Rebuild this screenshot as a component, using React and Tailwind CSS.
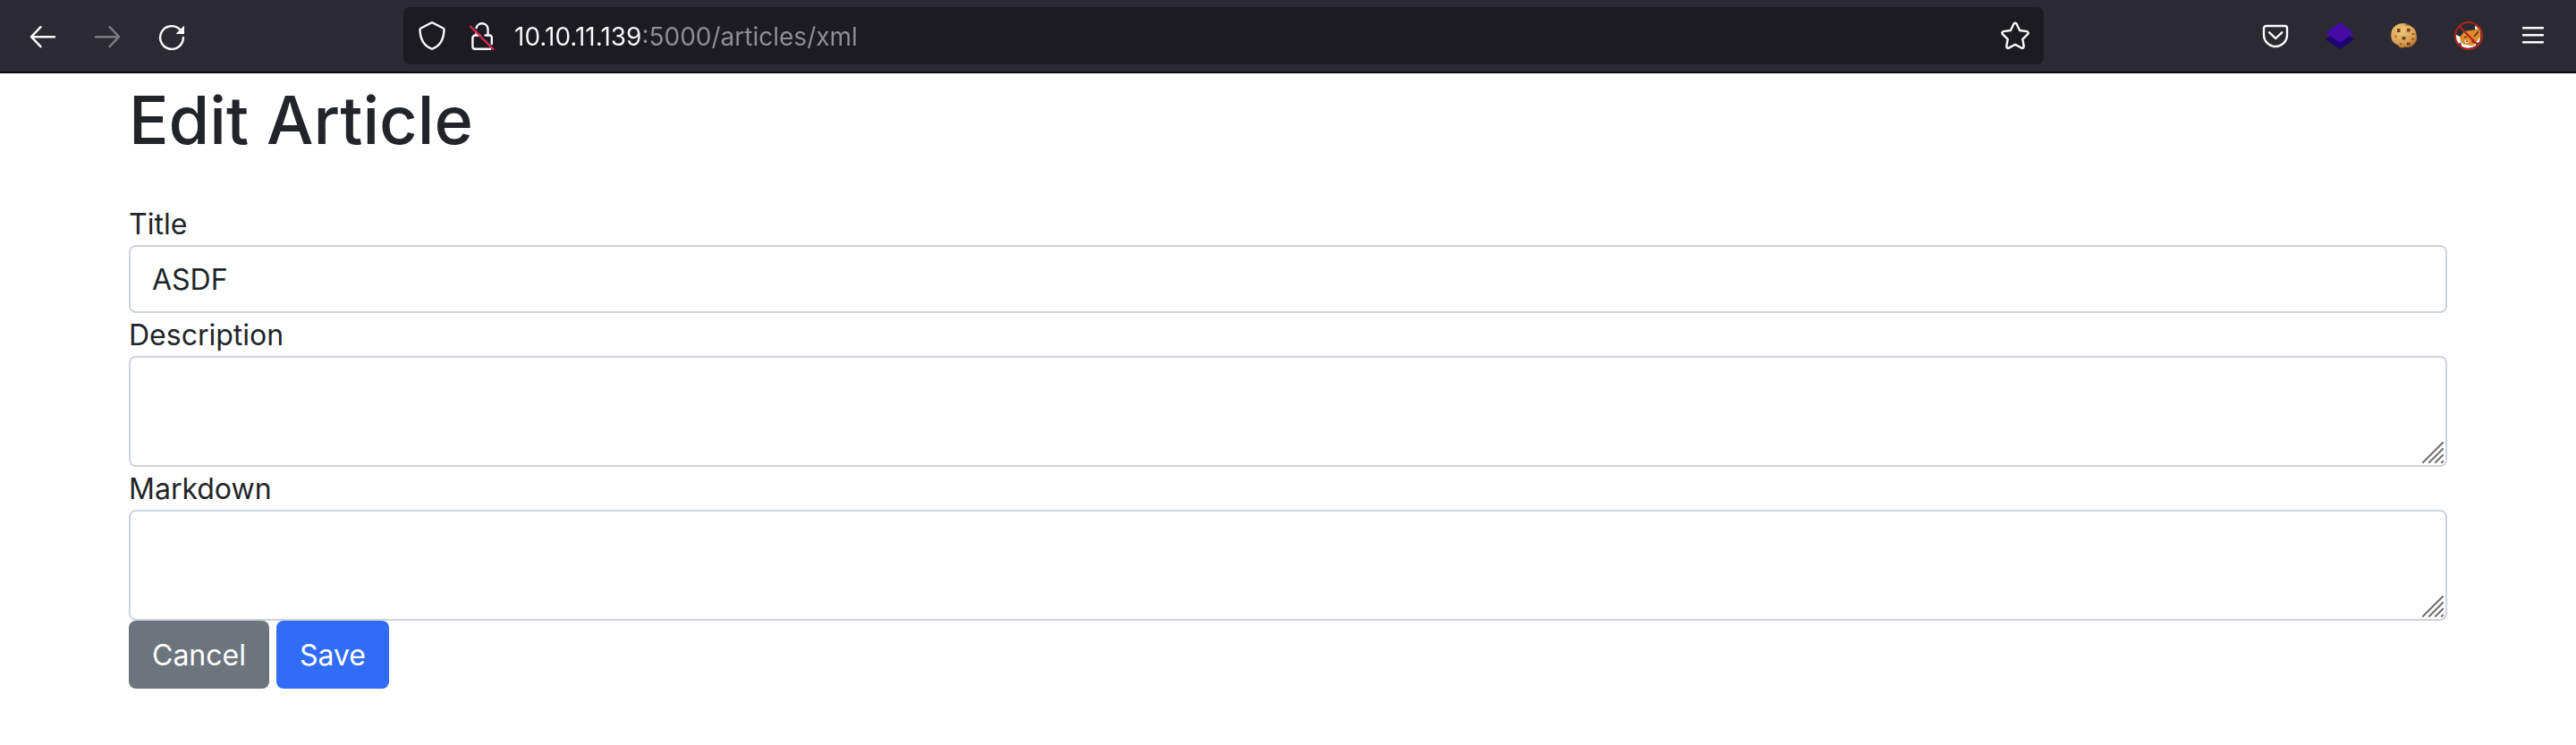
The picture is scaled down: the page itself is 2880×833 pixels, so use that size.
import React from "react";

function ToolbarButton({ label, children, disabled }) {
  return (
    <button
      type="button"
      aria-label={label}
      disabled={disabled}
      className="flex size-16 items-center justify-center rounded-lg text-[#fbfbfe] disabled:text-[#7d7c81]"
    >
      {children}
    </button>
  );
}

function Icon({ children }) {
  return (
    <svg
      className="size-8"
      viewBox="0 0 32 32"
      fill="none"
      stroke="currentColor"
      strokeWidth="2.4"
      strokeLinecap="round"
      strokeLinejoin="round"
      aria-hidden="true"
    >
      {children}
    </svg>
  );
}

function Toolbar() {
  return (
    <header className="flex h-[82px] items-center justify-between border-b-2 border-[#0c0c0d] bg-[#2b2a33] px-4">
      <nav aria-label="Browser" className="flex gap-2">
        <ToolbarButton label="Back">
          <Icon>
            <path d="M29 17.200H3.500M13.500 6.200 3 17.200l10.500 11" />
          </Icon>
        </ToolbarButton>
        <ToolbarButton label="Forward" disabled>
          <Icon>
            <path d="M3 17.200h25.500M18.500 6.200l10.500 11-10.500 11" />
          </Icon>
        </ToolbarButton>
        <ToolbarButton label="Reload">
          <Icon>
            <path d="M28.900 18A12.900 12.900 0 1 1 25 8.800" />
            <path d="M30 4.500V14h-9.500z" fill="currentColor" stroke="none" />
          </Icon>
        </ToolbarButton>
      </nav>

      <div className="flex h-16 w-[1834px] shrink items-center rounded-lg bg-[#1c1b22] px-4 text-[#fbfbfe]">
        <Icon>
          <path d="M15.200 1.500a2 2 0 0 1 1.600 0L28.400 7.500c.7.300 1.100 1 1.100 1.700C29.200 19 25.500 27 16.800 30.400a2 2 0 0 1-1.600 0C6.500 27 2.800 19 2.500 9.200c0-.7.4-1.400 1.100-1.700z" />
        </Icon>
        <span className="ml-6">
          <Icon>
            <path d="M9.500 7.200A6.600 6.600 0 0 1 22.500 8.600V15.500" />
            <path d="M13.500 15.500H8.300A2.900 2.900 0 0 0 5.400 18.400V28a2.800 2.800 0 0 0 2.800 2.800H25" />
            <path d="M9.500 15v-3M19.500 15.500H24.400A2.300 2.300 0 0 1 26.800 17.800V25" />
            <path d="m3 5.500 25.500 25.500" stroke="#e22850" />
          </Icon>
        </span>
        <input
          type="text"
          aria-label="Address"
          defaultValue="10.10.11.139:5000/articles/xml"
          spellCheck={false}
          className="ml-5 min-w-0 flex-1 bg-[linear-gradient(to_right,#fbfbfe_143px,#8f8f94_143px)] bg-clip-text pt-0.5 text-[28px] leading-10 text-transparent caret-white outline-none"
        />
        <button type="button" aria-label="Bookmark this page">
          <Icon>
            <path d="M14.400 2.700a1.800 1.800 0 0 1 3.200 0l3.500 7.300 8 1.100a1.800 1.800 0 0 1 1 3.100l-5.800 5.600 1.400 7.900a1.800 1.800 0 0 1-2.600 1.900L16 25.800l-7.100 3.800a1.800 1.800 0 0 1-2.600-1.900l1.400-7.900-5.800-5.600a1.800 1.800 0 0 1 1-3.100l8-1.100z" />
          </Icon>
        </button>
      </div>

      <div className="flex gap-2">
        <ToolbarButton label="Save to Pocket">
          <Icon>
            <path d="M5.500 5h21A2.500 2.500 0 0 1 29 7.500V15a13 13 0 0 1-26 0V7.500A2.500 2.500 0 0 1 5.500 5zM9.200 12.300l7 6.700 7-6.700" />
          </Icon>
        </ToolbarButton>
        <ToolbarButton label="Layers extension">
          <svg className="size-8" viewBox="0 0 32 32" aria-hidden="true">
            <path d="M16 9 32 20 16 31 0 20z" fill="#1b0370" />
            <path d="M16 1 32 12.500 16 24 0 12.500z" fill="#440ba5" />
          </svg>
        </ToolbarButton>
        <ToolbarButton label="Cookie editor">
          <svg className="size-8" viewBox="0 0 32 32" aria-hidden="true">
            <defs>
              <radialGradient id="cookie" cx="0.4" cy="0.3" r="0.75">
                <stop offset="0" stopColor="#eec580" />
                <stop offset="0.65" stopColor="#dba255" />
                <stop offset="1" stopColor="#b46d28" />
              </radialGradient>
            </defs>
            <path d="M11 2.500Q18 1 23 5q6 3 6.500 9 2 7-3 12-4 4-9 2.500l-4 1q-3 0-4.500-3-6-2-7.500-7.500-1-6 1.500-11Q6 3.500 11 2.500z" fill="url(#cookie)" />
            <g fill="#6b431c">
              <path d="M8 8h3.500v4H8zM19 8h3.500v3.500H19zM13.500 17h4v3.500h-4zM19 23.500h3.500v3H19z" />
              <path d="M5.500 15.500h2v2.500h-2zM24.500 13h3v2h-3zM11 24h2v2h-2zM17.500 3h4v1.500h-4zM24 18.500h3v2h-3z" opacity=".65" />
            </g>
          </svg>
        </ToolbarButton>
        <ToolbarButton label="Fox extension">
          <svg className="size-8" viewBox="0 0 32 32" aria-hidden="true">
            <path d="M23 4.500q5 3 6.500 9l-6-3zM2 15l7 3-1 5-4 2q-3-4-2-10z" fill="#fff" />
            <path d="M11 11 22 9.500l6-2 1.500 9Q28 24 21 27.500 11 29 7 22l-1-4z" fill="#e08a2c" />
            <path d="M7 23q4 4 14 4l5-4-2 4q-8 5-16 1zM11 21l6 1.500-4 2zM24 24l5-7-1 6z" fill="#fff" />
            <path d="m22 17 5-6M11 18l3-1M19 22l4 2M13 22.500h2" stroke="#4b2c13" strokeWidth="1.2" />
            <circle cx="16" cy="16" r="15" fill="none" stroke="#b3241c" strokeWidth="2" />
            <path d="m5.500 5.500 21 21" stroke="#b3241c" strokeWidth="2.2" />
          </svg>
        </ToolbarButton>
        <ToolbarButton label="Open application menu">
          <Icon>
            <path d="M5 7.200h22M5 15.200h22M5 23.200h22" />
          </Icon>
        </ToolbarButton>
      </div>
    </header>
  );
}

const labelClass = "block pt-0.5 leading-[46px]";

const fieldClass =
  "block w-full rounded-lg border-2 border-[#ced4da] bg-white px-6 pt-[13px] pb-[11px] text-[32px] leading-[48px] outline-none focus:border-[#86b7fe]";

const buttonClass = "rounded-lg px-[26px] pt-[15px] pb-[13px] text-white";

function TextAreaField({ id, label }) {
  return (
    <div>
      <label htmlFor={id} className={labelClass}>{label}</label>
      <div className="relative">
        <textarea id={id} name={id} className={`${fieldClass} h-[124px] resize-none`} />
        <svg
          className="pointer-events-none absolute right-1 bottom-1 size-6"
          viewBox="0 0 24 24"
          stroke="#6e6e6e"
          strokeWidth="2"
          strokeLinecap="square"
          aria-hidden="true"
        >
          <path d="M1 23 23 1M8 23 23 8M15 23l8-8M22 23l1-1" />
        </svg>
      </div>
    </div>
  );
}

export default function App() {
  return (
    <div className="min-h-screen bg-white font-['Inter','Liberation_Sans',sans-serif] text-[#212529]">
      <Toolbar />
      <main className="mx-[5%] pt-1 text-[32px] leading-[48px]">
        <h1 className="mb-11 text-[74px] leading-[96px] font-medium">Edit Article</h1>
        <form onSubmit={(e) => e.preventDefault()}>
          <label htmlFor="title" className={labelClass}>Title</label>
          <input id="title" name="title" type="text" defaultValue="ASDF" className={fieldClass} />
          <TextAreaField id="description" label="Description" />
          <TextAreaField id="markdown" label="Markdown" />
          <div className="flex gap-2">
            <a href="/" className={`${buttonClass} bg-[#6c757d]`}>Cancel</a>
            <button type="submit" className={`${buttonClass} bg-[#306cf6]`}>Save</button>
          </div>
        </form>
      </main>
    </div>
  );
}
